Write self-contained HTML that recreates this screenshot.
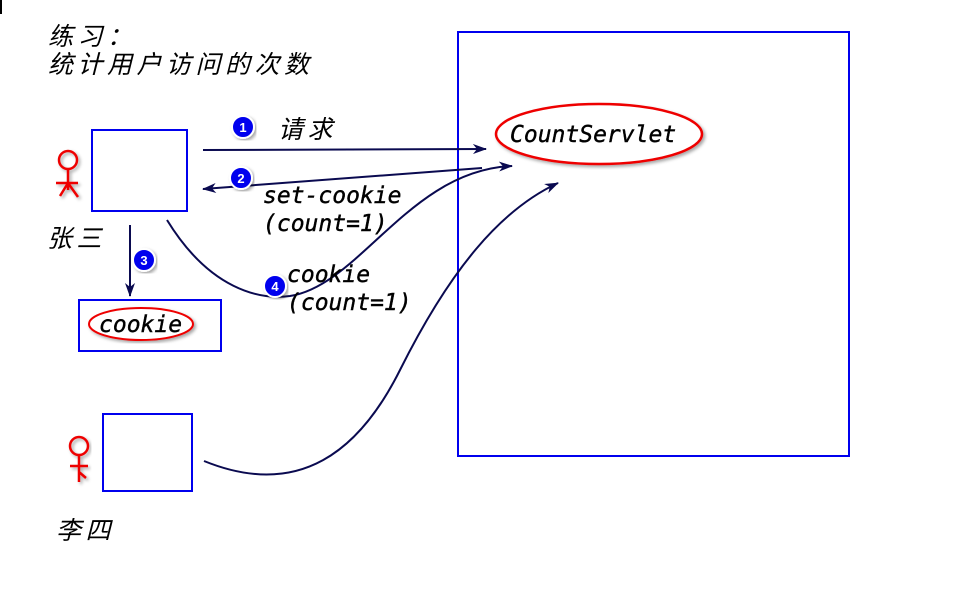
<!DOCTYPE html>
<html><head><meta charset="utf-8"><style>
body{margin:0;background:#fff;width:955px;height:593px;overflow:hidden}
svg{display:block}
.cj{font-family:"Liberation Sans","Noto Sans CJK SC",sans-serif;font-style:italic;font-size:25px;letter-spacing:4.5px;fill:#000}
.mo{font-family:"DejaVu Sans Mono","Liberation Mono",monospace;font-style:italic;font-size:23px;fill:#000;stroke:#000;stroke-width:0.4}
</style></head><body>
<svg width="955" height="593" viewBox="0 0 955 593">
<defs>
<marker id="a" markerWidth="14" markerHeight="10" refX="13" refY="5" orient="auto" markerUnits="userSpaceOnUse">
<path d="M0,0 L14,5 L0,10 L4,5 Z" fill="#0a0a50"/></marker>
<filter id="s"><feDropShadow dx="2" dy="2" stdDeviation="1.5" flood-opacity="0.35"/></filter>
</defs>
<rect x="0" y="0" width="2" height="14" fill="#000"/>
<text class="cj" x="48" y="45">练习：</text>
<text class="cj" x="48" y="73">统计用户访问的次数</text>
<rect x="458" y="32" width="391" height="424" fill="none" stroke="#0000ee" stroke-width="2"/>
<ellipse cx="599" cy="134" rx="103" ry="30" fill="#fff" stroke="#e00" stroke-width="2.5" filter="url(#s)"/>
<text class="mo" x="510" y="142">CountServlet</text>
<rect x="92" y="130" width="95" height="81" fill="none" stroke="#0000ee" stroke-width="2"/>
<rect x="79" y="300" width="142" height="51" fill="none" stroke="#0000ee" stroke-width="2"/>
<ellipse cx="141" cy="324" rx="52" ry="16" fill="#fff" stroke="#e00" stroke-width="2" filter="url(#s)"/>
<text class="mo" x="99" y="332">cookie</text>
<rect x="103" y="414" width="89" height="77" fill="none" stroke="#0000ee" stroke-width="2"/>
<g stroke="#e00" stroke-width="2.5" fill="none" filter="url(#s)">
<circle cx="68" cy="160" r="9"/><path d="M68,170 V190 M56,183 H78 M68,183 L60,196 M68,183 L78,197"/>
<circle cx="79" cy="446" r="9"/><path d="M79,456 V482 M70,466 H88 M79,472 L86,478"/>
</g>
<text class="cj" x="47" y="247">张三</text>
<text class="cj" x="56" y="539">李四</text>
<g stroke="#0a0a50" stroke-width="2" fill="none">
<path d="M203,150 L486,149" marker-end="url(#a)"/>
<path d="M482,168 L203,189" marker-end="url(#a)"/>
<path d="M130,225 L130,296" marker-end="url(#a)"/>
<path d="M167,220 C210,290 260,300 290,296 C360,285 410,170 512,166" marker-end="url(#a)"/>
<path d="M204,461 C300,500 360,450 400,370 C450,270 500,210 558,183" marker-end="url(#a)"/>
</g>
<text class="cj" x="278" y="138">请求</text>
<text class="mo" x="263" y="203">set-cookie</text>
<text class="mo" x="263" y="231">(count=1)</text>
<text class="mo" x="287" y="282">cookie</text>
<text class="mo" x="287" y="310">(count=1)</text>
<g font-family="Liberation Sans,sans-serif" font-weight="bold" font-size="13" fill="#fff" text-anchor="middle">
<circle cx="243" cy="127" r="11" fill="#0000ee" stroke="#fff" stroke-width="2" filter="url(#s)"/><text x="243" y="132">1</text>
<circle cx="241" cy="178" r="11" fill="#0000ee" stroke="#fff" stroke-width="2" filter="url(#s)"/><text x="241" y="183">2</text>
<circle cx="144" cy="260" r="11" fill="#0000ee" stroke="#fff" stroke-width="2" filter="url(#s)"/><text x="144" y="265">3</text>
<circle cx="275" cy="286" r="11" fill="#0000ee" stroke="#fff" stroke-width="2" filter="url(#s)"/><text x="275" y="291">4</text>
</g>
</svg>
</body></html>
